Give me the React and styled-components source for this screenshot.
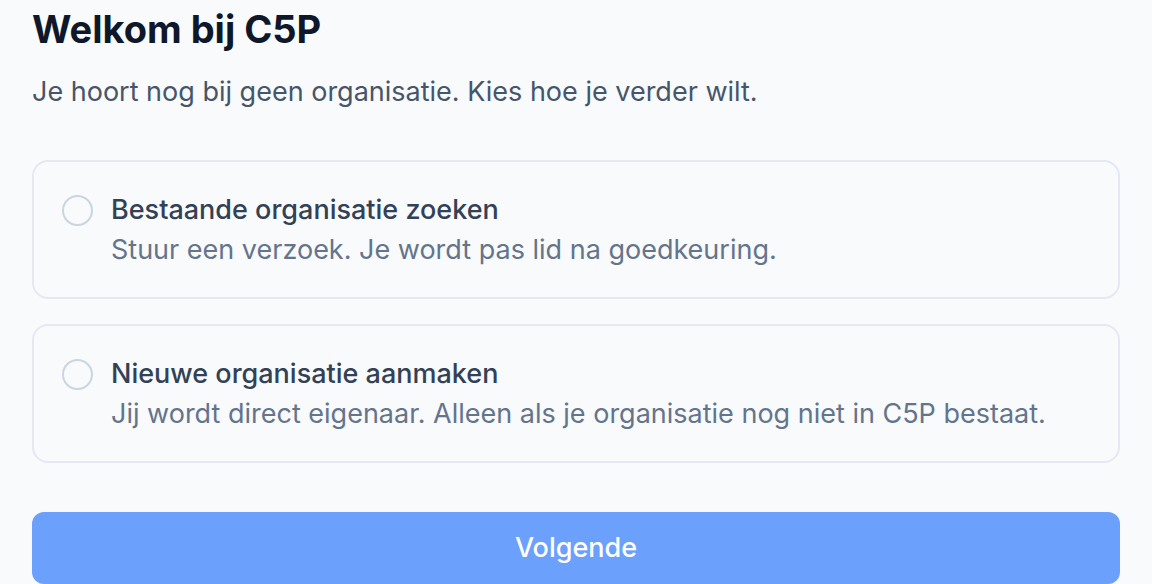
import React, { useState } from "react";
import styled, { createGlobalStyle } from "styled-components";

const GlobalStyle = createGlobalStyle`
  html, body {
    margin: 0;
    padding: 0;
    background: #f8fafc;
  }
  body {
    font-family: Inter, "Noto Sans", "Liberation Sans", sans-serif;
    -webkit-font-smoothing: antialiased;
  }
  * { box-sizing: border-box; }
`;

const Page = styled.main`
  min-height: 100vh;
  padding: 5px 32px 0 32px;
  background: #f8fafc;
  display: flex;
  flex-direction: column;
`;

const Title = styled.h1`
  margin: 0;
  font-size: 38px;
  line-height: 48px;
  font-weight: 700;
  color: #0f172a;
`;

const Lead = styled.p`
  margin: 19px 0 0 0;
  font-size: 27px;
  line-height: 40px;
  color: #475569;
`;

const Options = styled.div`
  margin-top: 48px;
  display: flex;
  flex-direction: column;
  gap: 25px;
`;

const Option = styled.label`
  display: flex;
  align-items: flex-start;
  gap: 18px;
  padding: 28px 28px 27px 28px;
  border: 2px solid ${(p) => (p.$active ? "#93c5fd" : "#e4e9f1")};
  border-radius: 16px;
  background: #f8fafc;
  cursor: pointer;
`;

const Radio = styled.span`
  flex: none;
  width: 31px;
  height: 31px;
  margin-top: 5px;
  border-radius: 50%;
  border: 2px solid ${(p) => (p.$checked ? "#3b82f6" : "#cbd5e1")};
  background: #f8fafc;
  display: flex;
  align-items: center;
  justify-content: center;

  &::after {
    content: "";
    width: 13px;
    height: 13px;
    border-radius: 50%;
    background: #3b82f6;
    display: ${(p) => (p.$checked ? "block" : "none")};
  }
`;

const OptionText = styled.span`
  display: flex;
  flex-direction: column;
`;

const OptionTitle = styled.span`
  font-size: 27px;
  line-height: 40px;
  font-weight: 500;
  color: #334155;
`;

const OptionDesc = styled.span`
  font-size: 27px;
  line-height: 40px;
  color: #64748b;
`;

const NextButton = styled.button`
  margin-top: 49px;
  width: 100%;
  height: 72px;
  border: none;
  border-radius: 12px;
  background: #6ba0fc;
  color: #ffffff;
  font-family: inherit;
  font-size: 27px;
  font-weight: 500;
  line-height: 40px;
  cursor: ${(p) => (p.disabled ? "not-allowed" : "pointer")};
`;

const choices = [
  {
    id: "join",
    title: "Bestaande organisatie zoeken",
    desc: "Stuur een verzoek. Je wordt pas lid na goedkeuring.",
  },
  {
    id: "create",
    title: "Nieuwe organisatie aanmaken",
    desc: "Jij wordt direct eigenaar. Alleen als je organisatie nog niet in C5P bestaat.",
  },
];

export default function App() {
  const [choice, setChoice] = useState(null);

  return (
    <>
      <GlobalStyle />
      <Page>
        <Title>Welkom bij C5P</Title>
        <Lead>Je hoort nog bij geen organisatie. Kies hoe je verder wilt.</Lead>
        <Options>
          {choices.map((c) => (
            <Option
              key={c.id}
              $active={choice === c.id}
              onClick={() => setChoice(c.id)}
            >
              <Radio $checked={choice === c.id} />
              <OptionText>
                <OptionTitle>{c.title}</OptionTitle>
                <OptionDesc>{c.desc}</OptionDesc>
              </OptionText>
            </Option>
          ))}
        </Options>
        <NextButton disabled={!choice}>Volgende</NextButton>
      </Page>
    </>
  );
}
